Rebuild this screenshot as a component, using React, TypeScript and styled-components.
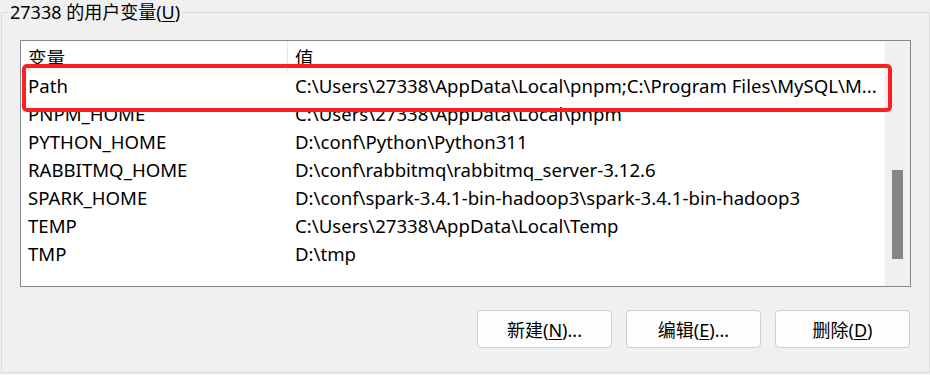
import React from "react";
import styled, { createGlobalStyle } from "styled-components";

const GlobalStyle = createGlobalStyle`
  html, body {
    margin: 0;
    padding: 0;
    background: #f0f0f0;
  }
  body {
    font-family: "Noto Sans", "Noto Sans CJK SC", sans-serif;
    font-size: 18.6px;
    color: #000;
  }
`;

const Group = styled.fieldset`
  box-sizing: border-box;
  width: 929px;
  height: 373px;
  margin: 0 0 0 1px;
  padding: 0 18px 0 18px;
  border: 1px solid #dcdcdc;
  display: flex;
  flex-direction: column;
`;

const Legend = styled.legend`
  margin-left: -12px;
  padding: 0 2px;
  line-height: 24px;
  height: 24px;
  font-size: 18px;
`;

const Key = styled.span`
  text-decoration: underline;
  text-underline-offset: 2px;
`;

const ListBox = styled.div`
  position: relative;
  box-sizing: border-box;
  margin-top: 16px;
  height: 247px;
  border: 1px solid #828790;
  background: #fff;
  display: flex;
`;

const Table = styled.div`
  flex: 1;
  display: flex;
  flex-direction: column;
  overflow: hidden;
`;

const Row = styled.div<{ $header?: boolean }>`
  display: grid;
  grid-template-columns: 267px 1fr;
  height: ${(p) => (p.$header ? 30 : 28)}px;
  align-items: center;
  white-space: nowrap;
`;

const Cell = styled.div<{ $divider?: boolean }>`
  height: 100%;
  display: flex;
  align-items: center;
  padding-left: 7px;
  overflow: hidden;
  border-right: ${(p) => (p.$divider ? "1px solid #e5e5e5" : "none")};
`;

const Scrollbar = styled.div`
  width: 25px;
  background: #f0f0f0;
  border-left: 1px solid #fafafa;
  display: flex;
  justify-content: center;
`;

const Thumb = styled.div`
  width: 11px;
  height: 89px;
  margin-top: 129px;
  background: #858585;
`;

const Highlight = styled.div`
  position: absolute;
  left: 1px;
  top: 23px;
  width: 870px;
  height: 48px;
  box-sizing: border-box;
  border: 4px solid #ff1f1f;
  border-radius: 5px;
  pointer-events: none;
`;

const Buttons = styled.div`
  display: flex;
  justify-content: flex-end;
  gap: 14px;
  margin-top: 23px;
  margin-right: 1px;
`;

const Button = styled.button`
  width: 135px;
  height: 38px;
  box-sizing: border-box;
  border: 1px solid #cfcfcf;
  border-radius: 4px;
  background: #fdfdfd;
  font: inherit;
  font-size: 18px;
  color: #000;
  padding: 0;
`;

const rows: [string, string][] = [
  ["Path", "C:\\Users\\27338\\AppData\\Local\\pnpm;C:\\Program Files\\MySQL\\M..."],
  ["PNPM_HOME", "C:\\Users\\27338\\AppData\\Local\\pnpm"],
  ["PYTHON_HOME", "D:\\conf\\Python\\Python311"],
  ["RABBITMQ_HOME", "D:\\conf\\rabbitmq\\rabbitmq_server-3.12.6"],
  ["SPARK_HOME", "D:\\conf\\spark-3.4.1-bin-hadoop3\\spark-3.4.1-bin-hadoop3"],
  ["TEMP", "C:\\Users\\27338\\AppData\\Local\\Temp"],
  ["TMP", "D:\\tmp"],
];

const App: React.FC = () => (
  <>
    <GlobalStyle />
    <Group>
      <Legend>
        27338 的用户变量(<Key>U</Key>)
      </Legend>
      <ListBox>
        <Table>
          <Row $header>
            <Cell $divider>变量</Cell>
            <Cell>值</Cell>
          </Row>
          {rows.map(([name, value]) => (
            <Row key={name}>
              <Cell>{name}</Cell>
              <Cell>{value}</Cell>
            </Row>
          ))}
        </Table>
        <Scrollbar>
          <Thumb />
        </Scrollbar>
        <Highlight />
      </ListBox>
      <Buttons>
        <Button>
          新建(<Key>N</Key>)...
        </Button>
        <Button>
          编辑(<Key>E</Key>)...
        </Button>
        <Button>
          删除(<Key>D</Key>)
        </Button>
      </Buttons>
    </Group>
  </>
);

export default App;
